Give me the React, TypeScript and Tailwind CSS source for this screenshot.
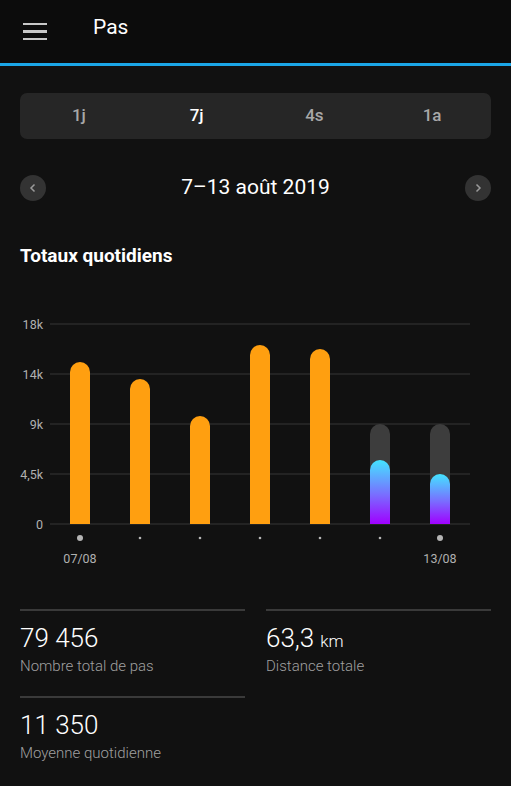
import React from 'react';

const font = { fontFamily: 'Roboto, "Noto Sans", sans-serif' };

const days = [
  { top: 362, label: '07/08', big: true },
  { top: 379 },
  { top: 416 },
  { top: 345 },
  { top: 349 },
  { top: 460, track: true },
  { top: 474, track: true, label: '13/08', big: true },
];

const grid = [
  { y: 324, t: '18k' },
  { y: 374, t: '14k' },
  { y: 424, t: '9k' },
  { y: 474, t: '4,5k' },
  { y: 524, t: '0' },
];

// chart svg starts at page y = 300
const OY = 300;

function Chart() {
  return (
    <svg width={511} height={270} className="block -mx-5">
      <defs>
        <linearGradient id="lg" x1="0" y1="0" x2="0" y2="1">
          <stop offset="0" stopColor="#44e4ff" />
          <stop offset="0.55" stopColor="#7a6cff" />
          <stop offset="1" stopColor="#a000ff" />
        </linearGradient>
      </defs>
      {grid.map((g) => (
        <g key={g.t}>
          <line x1={50} x2={470} y1={g.y - OY} y2={g.y - OY} stroke="#2a2a2a" strokeWidth={1.5} />
          <text x={43} y={g.y - OY + 4.5} fill="#b0b0b0" fontSize={12.5} textAnchor="end" style={font}>
            {g.t}
          </text>
        </g>
      ))}
      {days.map((d, i) => {
        const cx = 80 + i * 60;
        const bottom = 524 - OY;
        return (
          <g key={i}>
            {d.track && (
              <path
                d={`M${cx - 10} ${bottom} V${424 - OY + 10} a10 10 0 0 1 20 0 V${bottom} Z`}
                fill="#3d3d3d"
              />
            )}
            <path
              d={`M${cx - 10} ${bottom} V${d.top - OY + 10} a10 10 0 0 1 20 0 V${bottom} Z`}
              fill={d.track ? 'url(#lg)' : '#ff9f10'}
            />
            <circle cx={cx} cy={538 - OY} r={d.big ? 3 : 1.3} fill="#b5b5b5" />
            {d.label && (
              <text x={cx} y={563 - OY} fill="#b0b0b0" fontSize={12.5} textAnchor="middle" style={font}>
                {d.label}
              </text>
            )}
          </g>
        );
      })}
    </svg>
  );
}

function Stat({ value, unit, label }: { value: string; unit?: string; label: string }) {
  return (
    <div className="border-t-2 border-[#3a3a3a] h-[87px] pt-[12px]">
      <div className="text-[26px] leading-[30px] font-light text-white">
        {value}
        {unit && <span className="text-[17px] leading-none ml-1.5">{unit}</span>}
      </div>
      <div className="text-[15px] leading-[20px] font-light text-[#a0a0a0] mt-[3px]">{label}</div>
    </div>
  );
}

export default function App() {
  return (
    <div className="w-[511px] h-[786px] bg-[#111111] overflow-hidden" style={font}>
      <div className="h-[63px] bg-[#0c0c0c] flex items-center">
        <div className="ml-[23px] w-[24px] flex flex-col gap-[5px]">
          <div className="h-[2.5px] bg-[#c8c8c8]" />
          <div className="h-[2.5px] bg-[#c8c8c8]" />
          <div className="h-[2.5px] bg-[#c8c8c8]" />
        </div>
        <div className="ml-[46px] text-[21px] text-white -mt-[8px]">Pas</div>
      </div>
      <div className="h-[3px] bg-[#1ba6e8]" />

      <div className="px-5">
        <div className="mt-[27px] h-[46px] rounded-[7px] bg-[#262626] grid grid-cols-4 items-center text-[17px] font-medium">
          <div className="text-center text-[#a8a8a8]">1j</div>
          <div className="text-center text-white">7j</div>
          <div className="text-center text-[#a8a8a8]">4s</div>
          <div className="text-center text-[#a8a8a8]">1a</div>
        </div>

        <div className="mt-[33px] flex items-center justify-between">
          <div className="w-[26px] h-[26px] rounded-full bg-[#333333] flex items-center justify-center">
            <svg width="12" height="12" viewBox="0 0 12 12">
              <path d="M7.5 2.5 L4 6 L7.5 9.5" stroke="#9a9a9a" strokeWidth="1.5" fill="none" />
            </svg>
          </div>
          <div className="text-[21px] text-white">7–13 août 2019</div>
          <div className="w-[26px] h-[26px] rounded-full bg-[#333333] flex items-center justify-center">
            <svg width="12" height="12" viewBox="0 0 12 12">
              <path d="M4.5 2.5 L8 6 L4.5 9.5" stroke="#9a9a9a" strokeWidth="1.5" fill="none" />
            </svg>
          </div>
        </div>

        <div className="mt-[40px] text-[19px] leading-[24px] font-bold text-white">Totaux quotidiens</div>

        <div className="mt-[32px]">
          <Chart />
        </div>

        <div className="mt-[39px] grid grid-cols-2 gap-x-[21px]">
          <Stat value="79 456" label="Nombre total de pas" />
          <Stat value="63,3" unit="km" label="Distance totale" />
          <Stat value="11 350" label="Moyenne quotidienne" />
        </div>
      </div>
    </div>
  );
}
